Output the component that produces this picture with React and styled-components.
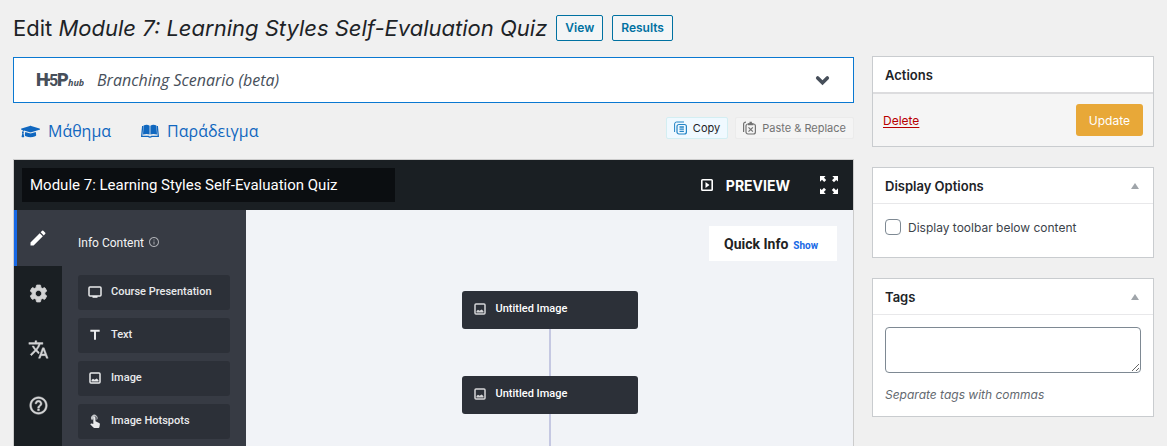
import { useState } from 'react';
import styled, { createGlobalStyle } from 'styled-components';
import {
  MdEdit,
  MdSettings,
  MdTranslate,
  MdHelpOutline,
  MdInfoOutline,
  MdTitle,
} from 'react-icons/md';
import { FaGraduationCap } from 'react-icons/fa';

const ui = `Inter, 'Liberation Sans', sans-serif`;
const roboto = `Roboto, 'Liberation Sans', sans-serif`;
const openSans = `'Open Sans', 'Noto Sans', sans-serif`;

const GlobalStyle = createGlobalStyle`
  * {
    box-sizing: border-box;
  }
  body {
    margin: 0;
    background: #f0f0f0;
    color: #3c434a;
    font-family: ${ui};
    font-size: 13px;
  }
  button, textarea {
    font-family: inherit;
    cursor: pointer;
  }
`;

const Page = styled.div`
  height: 100vh;
  overflow: hidden;
  padding: 13px 13px 0;
  display: flex;
  flex-direction: column;
`;
const TitleRow = styled.header`
  display: flex;
  align-items: center;
  gap: 9px;
  height: 30px;
  margin-bottom: 14px;
`;
const Title = styled.h1`
  margin: 0;
  color: #1d2327;
  font-size: 22px;
  line-height: 30px;
  font-weight: 400;
  white-space: nowrap;
`;
const TitleLink = styled.a`
  height: 26px;
  padding: 0 8px;
  border: 1px solid #0071a1;
  border-radius: 2px;
  background: #f3f5f6;
  color: #0071a1;
  font-size: 12px;
  line-height: 24px;
  font-weight: 600;
  text-decoration: none;
`;
const Columns = styled.div`
  flex: 1;
  min-height: 0;
  display: grid;
  grid-template-columns: minmax(0, 1fr) 282px;
  gap: 18px;
`;
const Main = styled.main`
  display: flex;
  flex-direction: column;
  min-height: 0;
`;

const HubSelect = styled.button`
  flex: none;
  display: flex;
  align-items: center;
  gap: 13px;
  height: 46px;
  padding: 0 23px 0 22px;
  border: 1px solid #0a78d1;
  background: #fff;
  color: #474f5a;
  text-align: left;
`;
const HubName = styled.span`
  flex: 1;
  font-family: ${openSans};
  font-size: 16px;
  font-style: italic;
`;
const HelpRow = styled.div`
  flex: none;
  display: flex;
  align-items: center;
  height: 56px;
  padding-left: 8px;
`;
const HelpLink = styled.a`
  display: flex;
  align-items: center;
  gap: 8px;
  margin-right: 30px;
  color: #1067bf;
  font-family: ${openSans};
  font-size: 16px;
  text-decoration: none;
`;
const ClipButtons = styled.div`
  display: flex;
  gap: 7px;
  margin: 0 0 6px auto;
`;
const ClipButton = styled.button`
  display: flex;
  align-items: center;
  gap: 6px;
  height: 22px;
  padding: 0 7px;
  border: 1px solid ${(p) => (p.$active ? '#d3eef2' : '#ebebeb')};
  border-radius: 2px;
  background: ${(p) => (p.$active ? '#f0f9ff' : '#f4f4f4')};
  color: ${(p) => (p.$active ? '#1d2327' : '#737373')};
  font-size: 11px;
  svg {
    color: ${(p) => (p.$active ? '#2384c6' : '#737373')};
  }
`;

const Editor = styled.section`
  flex: 1;
  min-height: 0;
  display: flex;
  flex-direction: column;
  border: 1px solid #ccc;
  border-bottom: 0;
  font-family: ${roboto};
`;
const EditorBar = styled.div`
  flex: none;
  display: flex;
  align-items: center;
  height: 50px;
  padding: 0 15px 0 8px;
  background: #1a1f23;
  color: #fff;
`;
const NameInput = styled.input`
  width: 373px;
  height: 34px;
  margin-right: auto;
  padding: 0 8px;
  border: 0;
  background: #0b0e11;
  color: #fff;
  font-family: ${roboto};
  font-size: 15px;
`;
const BarButton = styled.button`
  display: flex;
  align-items: center;
  gap: 13px;
  margin-left: 30px;
  padding: 0;
  border: 0;
  background: none;
  color: #fff;
  font-family: ${ui};
  font-size: 14px;
  font-weight: 700;
`;
const EditorBody = styled.div`
  flex: 1;
  min-height: 0;
  display: flex;
`;
const Rail = styled.nav`
  flex: none;
  width: 48px;
  background: #1a1f23;
`;
const RailButton = styled.button`
  display: flex;
  align-items: center;
  justify-content: center;
  width: 48px;
  height: 56px;
  padding: 0 0 1px;
  border: 0;
  background: ${(p) => (p.$active ? '#373b44' : 'none')};
  box-shadow: ${(p) => (p.$active ? 'inset 3px 0 #1768e5' : 'none')};
  color: ${(p) => (p.$active ? '#fff' : '#d3d4d5')};
  path[fill='none'] {
    stroke: none;
  }
`;
const ContentPanel = styled.div`
  flex: none;
  width: 184px;
  padding: 25px 16px 0;
  background: #373b44;
`;
const PanelTitle = styled.div`
  display: flex;
  align-items: center;
  gap: 4px;
  height: 16px;
  margin-bottom: 24px;
  color: #f3f4f5;
  font-size: 12px;
  svg {
    margin-bottom: 2px;
    color: #a9abb0;
  }
`;
const ContentList = styled.div`
  display: flex;
  flex-direction: column;
  gap: 8px;
`;
const ContentButton = styled.button`
  display: flex;
  align-items: center;
  gap: 8px;
  height: 35px;
  padding: 0 9px 2px;
  border: 0;
  border-radius: 3px;
  background: #2c3038;
  color: #e9eaec;
  font-family: ${roboto};
  font-size: 11px;
  font-weight: 500;
`;
const Canvas = styled.div`
  flex: 1;
  display: flex;
  flex-direction: column;
  align-items: center;
  padding: 16px 16px 0;
  background: #f1f3f7;
`;
const QuickInfo = styled.div`
  flex: none;
  align-self: flex-end;
  display: flex;
  align-items: baseline;
  gap: 5px;
  width: 128px;
  height: 35px;
  margin-bottom: 30px;
  padding-left: 15px;
  background: #fff;
  color: #222;
  font-size: 14px;
  line-height: 36px;
  font-weight: 700;
`;
const ShowButton = styled.button`
  padding: 0;
  border: 0;
  background: none;
  color: #1768e5;
  font-family: ${roboto};
  font-size: 10px;
  font-weight: 700;
`;
const Node = styled.div`
  flex: none;
  display: flex;
  align-items: center;
  gap: 8px;
  width: 176px;
  height: 38px;
  padding: 0 10px 3px;
  border-radius: 3px;
  background: #2c3038;
  color: #fff;
  font-size: 11px;
  font-weight: 500;
  svg {
    color: #d5d5d7;
  }
`;
const Connector = styled.div`
  flex: ${(p) => (p.$last ? '1' : '0 0 47px')};
  width: 2px;
  background: #c5c8e2;
`;

const Side = styled.aside`
  display: flex;
  flex-direction: column;
  gap: 20px;
  margin-top: -1px;
`;
const Box = styled.section`
  border: 1px solid #c9cccf;
  background: #fff;
`;
const BoxHead = styled.div`
  display: flex;
  align-items: center;
  justify-content: space-between;
  height: ${(p) => (p.$strong ? '37px' : '36px')};
  padding: 0 14px 0 12px;
  border-bottom: ${(p) => (p.$strong ? '2px solid #dcdcde' : '1px solid #e8e8ea')};
`;
const BoxTitle = styled.h2`
  margin: 0;
  color: #1d2327;
  font-size: 13px;
  font-weight: 600;
`;
const ToggleButton = styled.button`
  display: flex;
  padding: 0;
  border: 0;
  background: none;
  color: #a0a5aa;
`;
const BoxBody = styled.div`
  padding: 12px;
`;
const ActionsBar = styled.div`
  display: flex;
  align-items: center;
  justify-content: space-between;
  padding: 10px;
  background: #f5f5f5;
`;
const DeleteLink = styled.a`
  color: #b80000;
  font-size: 12px;
  text-underline-offset: 2px;
`;
const UpdateButton = styled.button`
  height: 32px;
  padding: 0 13px;
  border: 0;
  border-radius: 3px;
  background: #e8a838;
  color: #fff;
  font-size: 12px;
`;
const CheckLabel = styled.label`
  display: flex;
  align-items: center;
  gap: 7px;
  height: 22px;
  margin-bottom: 7px;
  font-size: 12px;
`;
const Checkbox = styled.input`
  appearance: none;
  width: 16px;
  height: 16px;
  margin: 0;
  border: 1px solid #7e8993;
  border-radius: 4px;
  background: #fff;
`;
const TagInput = styled.textarea`
  display: block;
  width: 100%;
  height: 46px;
  border: 1px solid #7e8993;
  border-radius: 4px;
  background: #fff;
  font-size: 13px;
`;
const Hint = styled.p`
  margin: 13px 0 0;
  color: #646970;
  font-size: 12px;
  line-height: 18px;
  font-style: italic;
`;

const HubLogo = () => (
  <svg width='48' height='20' viewBox='0 0 48 20' fill='currentColor' aria-label='H5P hub'>
    <text x='0' y='16' fontFamily='Roboto' fontSize='18' fontWeight='900'>H</text>
    <path d='M11 8.500h3v2.500h-3z' />
    <text x='13' y='16' fontFamily='Roboto' fontSize='16' fontWeight='700'>5</text>
    <text x='21' y='16' fontFamily='Roboto' fontSize='18' fontWeight='900'>P</text>
    <text x='32' y='16' fontFamily='Open Sans' fontSize='9' fontWeight='700' fontStyle='italic'>hub</text>
  </svg>
);
const ChevronIcon = () => (
  <svg
    width='15'
    height='11'
    viewBox='0 0 15 11'
    fill='none'
    stroke='currentColor'
    strokeWidth='3.600'
    strokeLinecap='round'
  >
    <path d='M2.700 3l4.800 4.800L12.300 3' />
  </svg>
);
const BookIcon = () => (
  <svg width='18' height='14' viewBox='0 0 18 14' fill='currentColor'>
    <path d='M2.600 1.400C4.800.3 7 .5 8.600 1.700V10.600C7 9.700 4.600 9.700 2 10.500zM15.400 1.400C13.200.3 11 .5 9.400 1.700v8.900c1.600-.9 4-.9 6.600-.1z' />
    <path
      d='M1.700 2L.7 12.300h6.700c.7 1 2.500 1 3.200 0h6.700L16.300 2'
      fill='none'
      stroke='currentColor'
      strokeWidth='1.300'
    />
  </svg>
);
const CopyIcon = () => (
  <svg width='13' height='14' viewBox='0 0 13 14' fill='none' stroke='currentColor'>
    <path d='M.6 11V3Q.6 1 2.600 1H10' />
    <rect x='3' y='3.500' width='9.400' height='9.500' rx='2' strokeWidth='1.200' />
    <path d='M5.500 6h4.400M5.500 8.200h4.400M5.500 10.400h4.400' strokeWidth='1.300' />
  </svg>
);
const PasteIcon = () => (
  <svg width='13' height='14' viewBox='0 0 13 14' fill='none' stroke='currentColor'>
    <path d='M.6 11V3Q.6 1.200 3 1.200' strokeWidth='1.200' />
    <rect x='3' y='3' width='9.400' height='10' rx='2' strokeWidth='1.200' />
    <path d='M5 3.200h5.400M6.500 1.800h2.400' strokeWidth='2' />
    <path d='M5.500 6.300l4.400 4.400M9.900 6.300l-4.400 4.400' strokeWidth='1.200' />
  </svg>
);
const ImageIcon = () => (
  <svg width='16' height='16' viewBox='0 0 16 16'>
    <rect x='3' y='3' width='10' height='10' rx='1' fill='none' stroke='currentColor' strokeWidth='1.500' />
    <path d='M4.500 11.500V10l1.500-1.200 1.500 1L9.800 8.500l1.700 1.700v1.300z' fill='currentColor' />
  </svg>
);
const ScreenIcon = () => (
  <svg width='16' height='16' viewBox='0 0 16 16'>
    <rect x='2' y='3' width='12' height='9' rx='1' fill='none' stroke='currentColor' strokeWidth='1.500' />
    <path d='M5.500 12h5v1.800h-5z' fill='currentColor' />
  </svg>
);
const TouchIcon = () => (
  <svg width='16' height='16' viewBox='0 0 16 16' fill='currentColor'>
    <path d='M5 7.200a3.200 3.200 0 1 1 4.600 0V4.800a1.300 1.300 0 0 0-2.600 0z' opacity='.8' />
    <path d='M6.300 4.800a1.100 1.100 0 0 1 2.200 0v3.400l3.600 1.700q.9.500.8 1.400l-.5 2.900q-.2.800-1 .8H7.300q-.5 0-.9-.4L3.200 11.300l.6-.6q.4-.4.9-.2l1.600.5z' />
  </svg>
);
const PreviewIcon = () => (
  <svg width='12' height='12' viewBox='0 0 12 12' fill='currentColor'>
    <rect x='.8' y='.8' width='10.400' height='10.400' rx='.8' fill='none' stroke='currentColor' strokeWidth='1.600' />
    <path d='M4.500 3v6l4-3z' />
  </svg>
);
const FullscreenIcon = () => (
  <svg width='18' height='18' viewBox='0 0 18 18' fill='currentColor'>
    {[0, 90, 180, 270].map((turn) => (
      <path
        key={turn}
        transform={`rotate(${turn} 9 9)`}
        d='M0 0h5.500L4 1.800l2.200 2.200L4.200 6 2 3.800.3 5.500H0z'
      />
    ))}
  </svg>
);
const ToggleIcon = () => (
  <svg width='8' height='6' viewBox='0 0 8 6' fill='currentColor'>
    <path d='M4 0l4 6H0z' />
  </svg>
);

const railItems = [
  { label: 'Content', icon: <MdEdit size={20} /> },
  { label: 'Settings', icon: <MdSettings size={21} strokeWidth={1} stroke='currentColor' /> },
  { label: 'Translations', icon: <MdTranslate size={21} strokeWidth={0.5} /> },
  { label: 'Help', icon: <MdHelpOutline size={21} strokeWidth={0.5} /> },
];
const contentTypes = [
  { name: 'Course Presentation', icon: <ScreenIcon /> },
  { name: 'Text', icon: <MdTitle size={16} /> },
  { name: 'Image', icon: <ImageIcon /> },
  { name: 'Image Hotspots', icon: <TouchIcon /> },
];

export default function App() {
  const [Name, setName] = useState('Module 7: Learning Styles Self-Evaluation Quiz');
  const [Tab, setTab] = useState('Content');
  return (
    <>
      <GlobalStyle />
      <Page>
        <TitleRow>
          <Title>
            Edit <em>Module 7: Learning Styles Self-Evaluation Quiz</em>
          </Title>
          <TitleLink href='#view'>View</TitleLink>
          <TitleLink href='#results'>Results</TitleLink>
        </TitleRow>
        <Columns>
          <Main>
            <HubSelect type='button'>
              <HubLogo />
              <HubName>Branching Scenario (beta)</HubName>
              <ChevronIcon />
            </HubSelect>
            <HelpRow>
              <HelpLink href='#tutorial'>
                <FaGraduationCap size={19} />
                Μάθημα
              </HelpLink>
              <HelpLink href='#example'>
                <BookIcon />
                Παράδειγμα
              </HelpLink>
              <ClipButtons>
                <ClipButton type='button' $active>
                  <CopyIcon />
                  Copy
                </ClipButton>
                <ClipButton type='button'>
                  <PasteIcon />
                  Paste &amp; Replace
                </ClipButton>
              </ClipButtons>
            </HelpRow>
            <Editor>
              <EditorBar>
                <NameInput
                  aria-label='Title'
                  value={Name}
                  onChange={(e) => setName(e.target.value)}
                />
                <BarButton type='button'>
                  <PreviewIcon />
                  PREVIEW
                </BarButton>
                <BarButton type='button' aria-label='Fullscreen'>
                  <FullscreenIcon />
                </BarButton>
              </EditorBar>
              <EditorBody>
                <Rail>
                  {railItems.map((item) => (
                    <RailButton
                      key={item.label}
                      type='button'
                      aria-label={item.label}
                      $active={Tab === item.label}
                      onClick={() => setTab(item.label)}
                    >
                      {item.icon}
                    </RailButton>
                  ))}
                </Rail>
                <ContentPanel>
                  <PanelTitle>
                    Info Content
                    <MdInfoOutline size={12} />
                  </PanelTitle>
                  <ContentList>
                    {contentTypes.map((type) => (
                      <ContentButton key={type.name} type='button'>
                        {type.icon}
                        {type.name}
                      </ContentButton>
                    ))}
                  </ContentList>
                </ContentPanel>
                <Canvas>
                  <QuickInfo>
                    Quick Info
                    <ShowButton type='button'>Show</ShowButton>
                  </QuickInfo>
                  <Node>
                    <ImageIcon />
                    Untitled Image
                  </Node>
                  <Connector />
                  <Node>
                    <ImageIcon />
                    Untitled Image
                  </Node>
                  <Connector $last />
                </Canvas>
              </EditorBody>
            </Editor>
          </Main>
          <Side>
            <Box>
              <BoxHead $strong>
                <BoxTitle>Actions</BoxTitle>
              </BoxHead>
              <ActionsBar>
                <DeleteLink href='#delete'>Delete</DeleteLink>
                <UpdateButton type='submit'>Update</UpdateButton>
              </ActionsBar>
            </Box>
            <Box>
              <BoxHead>
                <BoxTitle>Display Options</BoxTitle>
                <ToggleButton type='button' aria-label='Toggle display options'>
                  <ToggleIcon />
                </ToggleButton>
              </BoxHead>
              <BoxBody>
                <CheckLabel>
                  <Checkbox type='checkbox' />
                  Display toolbar below content
                </CheckLabel>
              </BoxBody>
            </Box>
            <Box>
              <BoxHead>
                <BoxTitle>Tags</BoxTitle>
                <ToggleButton type='button' aria-label='Toggle tags'>
                  <ToggleIcon />
                </ToggleButton>
              </BoxHead>
              <BoxBody>
                <TagInput aria-label='Tags' />
                <Hint>Separate tags with commas</Hint>
              </BoxBody>
            </Box>
          </Side>
        </Columns>
      </Page>
    </>
  );
}
